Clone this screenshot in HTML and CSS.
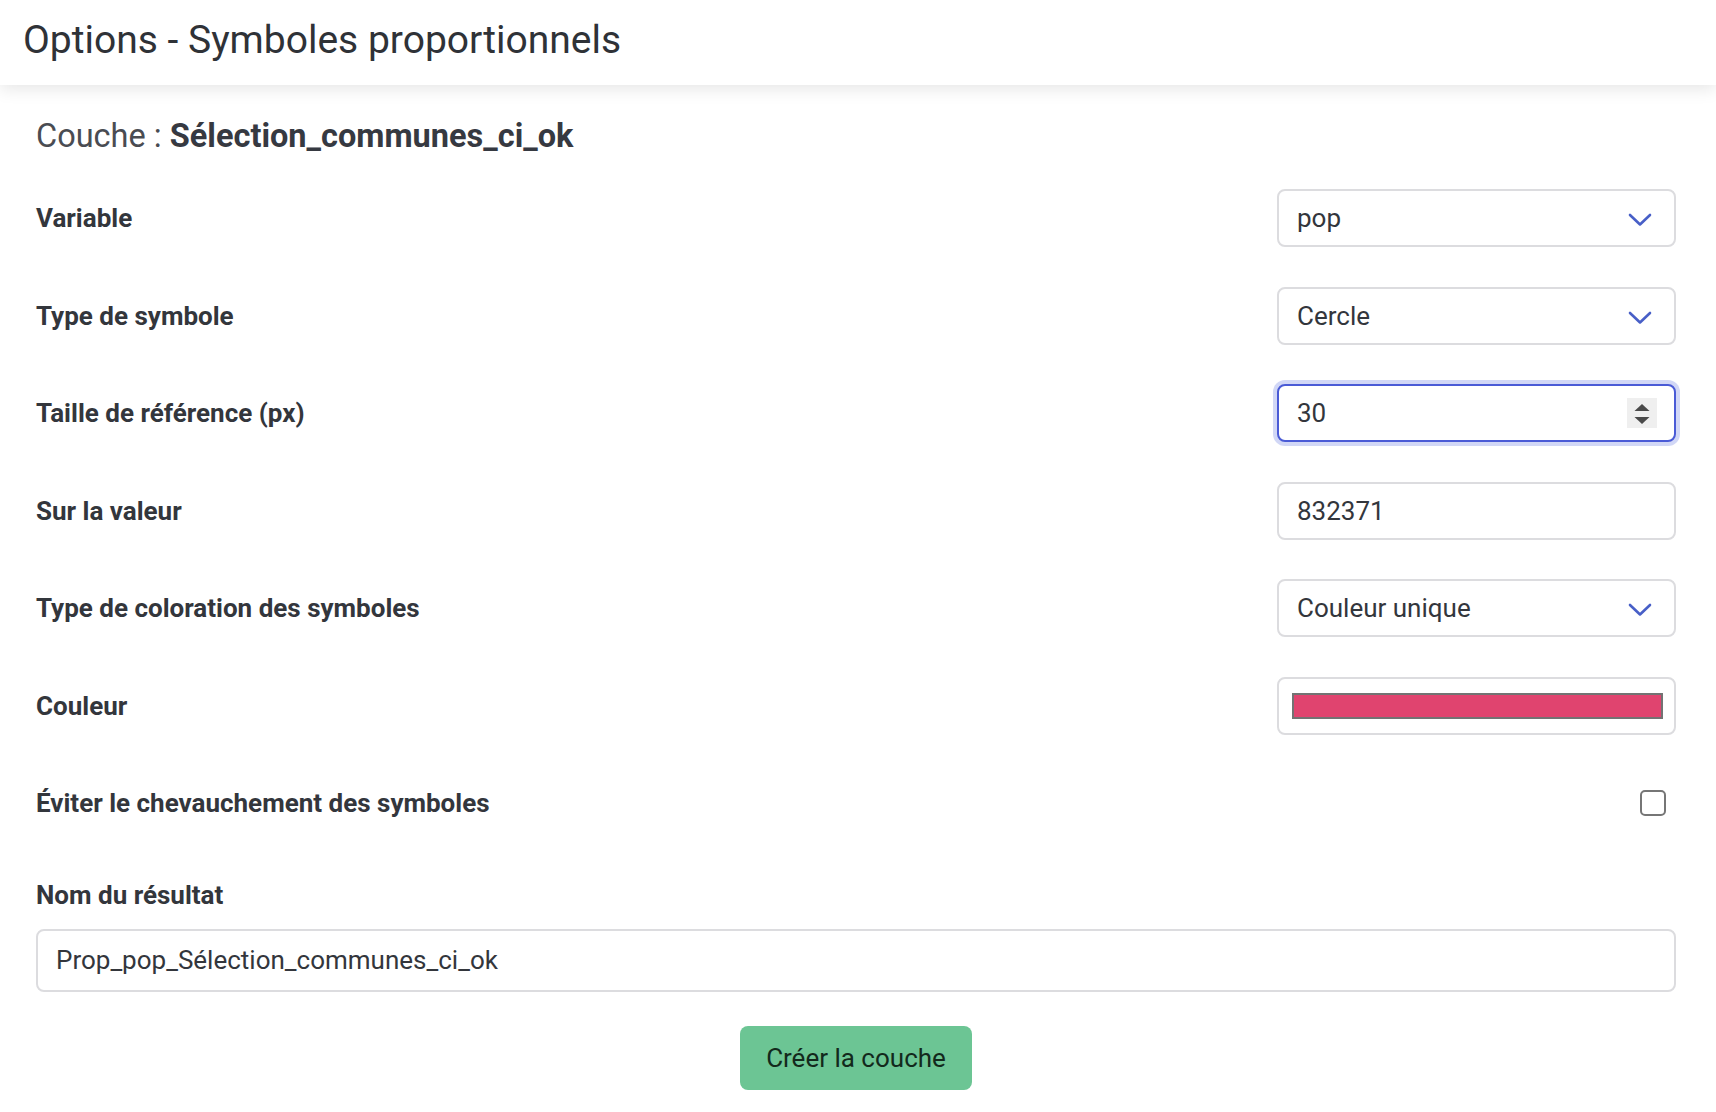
FILE: index.html
```html
<!DOCTYPE html>
<html lang="fr">
<head>
<meta charset="utf-8">
<title>Options - Symboles proportionnels</title>
<link rel="stylesheet" href="styles.css">
</head>
<body>
<header class="modal-head">
  <h1 class="modal-title">Options - Symboles proportionnels</h1>
</header>
<main class="modal-body">
  <p class="layer-line">Couche : <strong>Sélection_communes_ci_ok</strong></p>

  <div class="field-row">
    <label class="field-label">Variable</label>
    <div class="control select-wrap">
      <div class="fake-input select">pop</div>
      <svg class="chevron" viewBox="0 0 24 14" width="24" height="14"><polyline points="2,2 12,11.5 22,2" fill="none" stroke="#485fc7" stroke-width="2.6" stroke-linecap="round" stroke-linejoin="round"/></svg>
    </div>
  </div>

  <div class="field-row">
    <label class="field-label">Type de symbole</label>
    <div class="control select-wrap">
      <div class="fake-input select">Cercle</div>
      <svg class="chevron" viewBox="0 0 24 14" width="24" height="14"><polyline points="2,2 12,11.5 22,2" fill="none" stroke="#485fc7" stroke-width="2.6" stroke-linecap="round" stroke-linejoin="round"/></svg>
    </div>
  </div>

  <div class="field-row">
    <label class="field-label">Taille de référence (px)</label>
    <div class="control number-wrap">
      <div class="fake-input focused">30</div>
      <span class="spinner">
        <svg viewBox="0 0 30 30" width="30" height="30"><polygon points="15,6 22.5,13 7.5,13" fill="#4a4a4a"/><polygon points="7.5,19 22.5,19 15,26" fill="#4a4a4a"/></svg>
      </span>
    </div>
  </div>

  <div class="field-row">
    <label class="field-label">Sur la valeur</label>
    <div class="control">
      <div class="fake-input">832371</div>
    </div>
  </div>

  <div class="field-row">
    <label class="field-label">Type de coloration des symboles</label>
    <div class="control select-wrap">
      <div class="fake-input select">Couleur unique</div>
      <svg class="chevron" viewBox="0 0 24 14" width="24" height="14"><polyline points="2,2 12,11.5 22,2" fill="none" stroke="#485fc7" stroke-width="2.6" stroke-linecap="round" stroke-linejoin="round"/></svg>
    </div>
  </div>

  <div class="field-row">
    <label class="field-label">Couleur</label>
    <div class="control">
      <div class="fake-input color-input"><span class="swatch"></span></div>
    </div>
  </div>

  <div class="field-row">
    <label class="field-label">Éviter le chevauchement des symboles</label>
    <div class="control check-control">
      <span class="checkbox"></span>
    </div>
  </div>

  <div class="name-field">
    <label class="field-label">Nom du résultat</label>
    <div class="fake-input wide">Prop_pop_Sélection_communes_ci_ok</div>
  </div>

  <div class="actions">
    <button class="btn-success">Créer la couche</button>
  </div>
</main>
</body>
</html>
```

FILE: styles.css
```css
* { box-sizing: border-box; }
html, body {
  margin: 0;
  padding: 0;
  background: #ffffff;
  font-family: Roboto, "Liberation Sans", Arial, sans-serif;
  color: #363636;
}
.modal-head {
  height: 85px;
  display: flex;
  align-items: center;
  padding-left: 23px;
  background: #ffffff;
  box-shadow: 0 4px 16px rgba(0, 0, 0, 0.1);
  position: relative;
}
.modal-title {
  margin: 0;
  font-size: 39px;
  font-weight: 400;
  color: #2f3237;
  line-height: 1;
  padding-bottom: 4px;
}
.modal-body {
  padding: 0 40px 0 36px;
}
.layer-line {
  margin: 0;
  padding-top: 32px;
  height: 104px;
  font-size: 32.5px;
  line-height: 38px;
  color: #4a4c52;
}
.layer-line strong {
  color: #363941;
  font-weight: 700;
}
.field-row {
  display: flex;
  align-items: center;
  justify-content: space-between;
  height: 58px;
  margin-bottom: 39.5px;
}
.field-label {
  font-size: 26px;
  font-weight: 700;
  color: #33363c;
}
.control {
  width: 399px;
  height: 58px;
  position: relative;
}
.fake-input {
  width: 100%;
  height: 100%;
  border: 2px solid #dcdcdf;
  border-radius: 8px;
  background: #fff;
  display: flex;
  align-items: center;
  padding-left: 18px;
  font-size: 26px;
  color: #33363c;
}
.fake-input.focused {
  border-color: #4a5bd6;
  box-shadow: 0 0 0 4px rgba(72, 95, 220, 0.25);
}
.chevron {
  position: absolute;
  right: 24px;
  top: 24px;
}
.spinner {
  position: absolute;
  right: 19px;
  top: 14px;
  width: 30px;
  height: 30px;
  background: #efefef;
  display: block;
}
.spinner svg { display: block; }
.color-input {
  padding: 0 11px 0 13px;
}
.swatch {
  display: block;
  width: 100%;
  height: 26px;
  background: #e0446f;
  border: 2px solid #737373;
}
.check-control {
  display: flex;
  align-items: center;
  justify-content: flex-end;
  padding-right: 10px;
}
.checkbox {
  width: 26px;
  height: 26px;
  border: 2px solid #767676;
  border-radius: 5px;
  background: #fff;
}
.name-field {
  padding-top: 8px;
}
.name-field .field-label {
  display: block;
  line-height: 30px;
  margin-bottom: 19px;
}
.fake-input.wide {
  height: 63px;
}
.actions {
  display: flex;
  justify-content: center;
  margin-top: 34px;
}
.btn-success {
  width: 232px;
  height: 64px;
  border: none;
  border-radius: 8px;
  background: #6cc594;
  color: #13291c;
  font-family: Roboto, "Liberation Sans", Arial, sans-serif;
  font-size: 26px;
  font-weight: 400;
  cursor: pointer;
}
```
